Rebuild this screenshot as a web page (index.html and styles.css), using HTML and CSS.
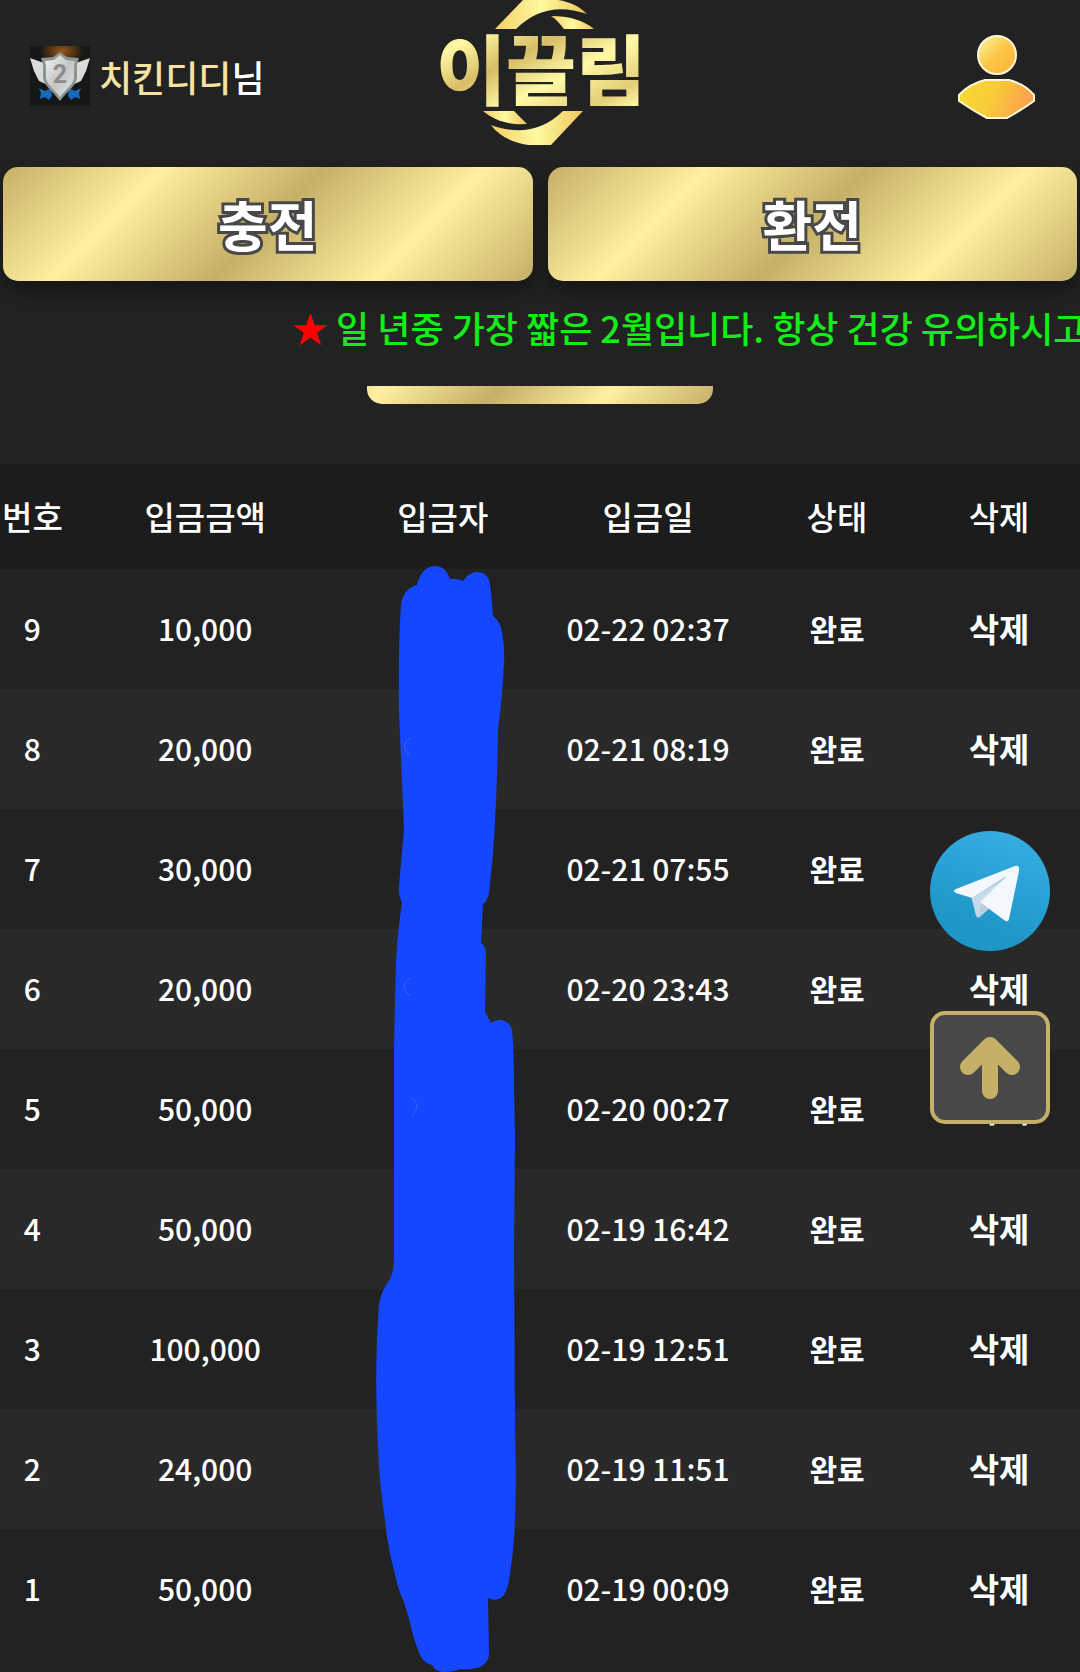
FILE: index.html
```html
<!DOCTYPE html>
<html lang="en">
<head>
    <meta charset="UTF-8">
    <meta name="viewport" content="width=device-width, initial-scale=1.0">
    <title>이끌림 - 충전 내역</title>
    <link rel="stylesheet" href="styles.css">
</head>
<body>
    <header class="site-header">
        <div class="top-bar">
            <div class="member">
                <svg class="level-badge" viewBox="0 0 60 60" role="img" aria-label="레벨 2">
                    <defs>
                        <linearGradient id="silver" x1="0" y1="0" x2="1" y2="1">
                            <stop offset="0" stop-color="#f4f4f4"/>
                            <stop offset="0.5" stop-color="#c4c6c6"/>
                            <stop offset="1" stop-color="#e2e2e2"/>
                        </linearGradient>
                        <radialGradient id="flame">
                            <stop offset="0" stop-color="#9a5a14"/>
                            <stop offset="1" stop-color="#151814"/>
                        </radialGradient>
                    </defs>
                    <rect width="60" height="60" fill="#151814"/>
                    <ellipse cx="32" cy="5" rx="22" ry="14" fill="url(#flame)"/>
                    <path d="M9 42l6 3 6-3 1 8-3 4-4-3-5 2 1-6zM51 42l-6 3-6-3-1 8 3 4 4-3 5 2-1-6z" fill="#1668bd"/>
                    <path d="M0 12l14 5 4 22-9-4-5-10zM60 12l-14 5-4 22 9-4 5-10z" fill="#d9dbd9"/>
                    <path d="M30 6l7 5 12 1-2 7v12c0 8-9 13-17 24-8-11-17-16-17-24V19l-2-7 12-1z" fill="#8f9292"/>
                    <path d="M30 9l6 5 9 1-1 5v11c0 7-7 11-14 20-7-9-14-13-14-20V20l-1-5 9-1z" fill="url(#silver)"/>
                    <text class="badge-number" x="30" y="37" text-anchor="middle">2</text>
                </svg>
                <p class="member-name"><span>치킨디디</span>님</p>
            </div>
            <a class="logo" href="#" aria-label="이끌림">
                <svg viewBox="0 0 200 146">
                    <defs>
                        <linearGradient id="gold" x1="0" y1="0" x2="1" y2="1">
                            <stop offset="0" stop-color="#d9b960"/>
                            <stop offset="0.2" stop-color="#fff9a6"/>
                            <stop offset="0.4" stop-color="#d8bc66"/>
                            <stop offset="0.6" stop-color="#fff9a6"/>
                            <stop offset="0.8" stop-color="#e3cd78"/>
                            <stop offset="0.9" stop-color="#fff6a0"/>
                            <stop offset="1" stop-color="#cfab55"/>
                        </linearGradient>
                        <linearGradient id="swoosh" x1="0" y1="0" x2="1" y2="0">
                            <stop offset="0" stop-color="#f3cf66"/>
                            <stop offset="0.5" stop-color="#fff9a0"/>
                            <stop offset="1" stop-color="#eec65c"/>
                        </linearGradient>
                    </defs>
                    <path d="M55 29L83 0h35c12 2 21 6 29 14-26-9-50-6-71 15z" fill="url(#swoosh)"/>
                    <path d="M111 16c18 0 32 4 43 13h-30c-4-5-8-10-13-13z" fill="url(#swoosh)"/>
                    <path d="M43 111h31l13 13c-18 1-32-3-44-13z" fill="url(#swoosh)"/>
                    <path d="M143 111l-32 34H88c-17-3-29-9-37-20 27 10 52 6 72-14z" fill="url(#swoosh)"/>
                    <text class="logo-text" x="101" y="99" text-anchor="middle" fill="url(#gold)">이끌림</text>
                </svg>
            </a>
            <button class="profile-btn" type="button" aria-label="내 정보">
                <svg viewBox="0 0 77 84">
                    <defs>
                        <linearGradient id="head" x1="0" y1="0" x2="1" y2="1">
                            <stop offset="0.1" stop-color="#fdee98"/>
                            <stop offset="0.5" stop-color="#fcc744"/>
                            <stop offset="1" stop-color="#fbb03c"/>
                        </linearGradient>
                        <linearGradient id="torso" x1="0" y1="0" x2="1" y2="0.2">
                            <stop offset="0" stop-color="#f6dc34"/>
                            <stop offset="0.5" stop-color="#f9cb3a"/>
                            <stop offset="1" stop-color="#fba34c"/>
                        </linearGradient>
                    </defs>
                    <circle cx="39" cy="20" r="19" fill="url(#head)" stroke="#fff6d8" stroke-width="2"/>
                    <path d="M27 45h24q16 4 25 15v6q-11 8-27 17H29Q14 75 1 66v-6q10-11 26-15z" fill="url(#torso)" stroke="#fff6d8" stroke-width="2"/>
                </svg>
            </button>
        </div>
        <div class="cash-buttons">
            <button class="gold-btn" type="button">충전</button>
            <button class="gold-btn" type="button">환전</button>
        </div>
        <div class="notice"><span class="star">★</span> 일 년중 가장 짧은 2월입니다. 항상 건강 유의하시고</div>
    </header>

    <main>
        <!-- only the lower edge of this button is left under the header -->
        <div class="scrolled-row">
            <button class="gold-btn" type="button" aria-label="충전하기"></button>
        </div>

        <div class="history">
            <table>
                <colgroup>
                    <col class="col-no">
                    <col class="col-amount">
                    <col class="col-name">
                    <col class="col-date">
                    <col class="col-state">
                    <col class="col-delete">
                </colgroup>
                <thead>
                    <tr>
                        <th>번호</th>
                        <th>입금금액</th>
                        <th>입금자</th>
                        <th>입금일</th>
                        <th>상태</th>
                        <th>삭제</th>
                    </tr>
                </thead>
                <tbody>
                    <tr><td>9</td><td>10,000</td><td></td><td>02-22 02:37</td><td class="state">완료</td><td><button class="delete-btn" type="button">삭제</button></td></tr>
                    <tr><td>8</td><td>20,000</td><td></td><td>02-21 08:19</td><td class="state">완료</td><td><button class="delete-btn" type="button">삭제</button></td></tr>
                    <tr><td>7</td><td>30,000</td><td></td><td>02-21 07:55</td><td class="state">완료</td><td><button class="delete-btn" type="button">삭제</button></td></tr>
                    <tr><td>6</td><td>20,000</td><td></td><td>02-20 23:43</td><td class="state">완료</td><td><button class="delete-btn" type="button">삭제</button></td></tr>
                    <tr><td>5</td><td>50,000</td><td></td><td>02-20 00:27</td><td class="state">완료</td><td><button class="delete-btn" type="button">삭제</button></td></tr>
                    <tr><td>4</td><td>50,000</td><td></td><td>02-19 16:42</td><td class="state">완료</td><td><button class="delete-btn" type="button">삭제</button></td></tr>
                    <tr><td>3</td><td>100,000</td><td></td><td>02-19 12:51</td><td class="state">완료</td><td><button class="delete-btn" type="button">삭제</button></td></tr>
                    <tr><td>2</td><td>24,000</td><td></td><td>02-19 11:51</td><td class="state">완료</td><td><button class="delete-btn" type="button">삭제</button></td></tr>
                    <tr><td>1</td><td>50,000</td><td></td><td>02-19 00:09</td><td class="state">완료</td><td><button class="delete-btn" type="button">삭제</button></td></tr>
                </tbody>
            </table>
            <!-- marker strokes over the depositor names -->
            <svg class="marker" viewBox="367 560 153 1112" aria-hidden="true">
                <path fill="#1447ff" d="M417 585C420 572 427 566 435 566C443 566 447 571 450 579Q457 578 463 581Q469 572 477 572Q488 572 490 584Q492 600 493 616Q500 621 502 632Q505 648 504 664Q502 700 498 729Q497 800 493 854L489 893Q487 902 483 904Q482 925 481 943Q486 946 486 954L485 1012L491 1023Q495 1020 500 1020Q510 1021 512 1030Q514 1050 514 1086L515 1136L514 1250L515 1428Q517 1490 514 1538Q512 1565 508 1585Q505 1599 494 1600L488 1598L489 1655Q488 1663 480 1667Q470 1670 460 1669Q454 1672 443 1672Q435 1671 432 1665Q424 1663 420 1655Q412 1635 410 1622L404 1602Q398 1590 395 1574Q388 1550 385 1520Q379 1480 378 1447Q374 1370 379 1304Q381 1291 390 1279Q394 1270 394 1260L394 1050Q395 1000 396 961Q398 930 402 902Q398 895 399 886L404 829L399 711Q398 650 401 604Q404 588 417 585Z"/>
                <path fill="none" stroke="#3a63ff" d="M410 738q-11 8 0 17M410 978q-12 8 0 18M412 1098q10 8 0 18"/>
            </svg>
        </div>
    </main>

    <div class="floating">
        <a class="telegram" href="#" aria-label="텔레그램">
            <svg viewBox="0 0 120 120">
                <defs>
                    <linearGradient id="sky" x1="0.7" y1="0" x2="0.4" y2="0.8">
                        <stop offset="0" stop-color="#37aee2"/>
                        <stop offset="1" stop-color="#1e96c8"/>
                    </linearGradient>
                </defs>
                <circle cx="60" cy="60" r="60" fill="url(#sky)"/>
                <path d="M41 65l5 20q2 3 5 0l10-9-8-8z" fill="#bccde0"/>
                <path d="M42 67l6 20 4-17 26-25z" fill="#c8daea"/>
                <path d="M26 58L85 35q5-1 4 5L79 88q-1 4-5 1L50 71l27-26-35 22-16-5q-4-2 0-4z" fill="#f4f8fc"/>
            </svg>
        </a>
        <button class="top-btn" type="button" aria-label="맨 위로">
            <svg viewBox="0 0 60 62">
                <path d="M30 54V10M8 30L30 8l22 22" fill="none" stroke="#c5b067" stroke-width="16" stroke-linecap="round" stroke-linejoin="round"/>
            </svg>
        </button>
    </div>
</body>
</html>
```
FILE: styles.css
```css
* {
    box-sizing: border-box;
}

body {
    font-family: "Noto Sans CJK KR", "Noto Sans", sans-serif;
    font-weight: 500;
    margin: 0;
    min-height: 100vh;
    background-color: #222;
    color: #fff;
}

button {
    font-family: inherit;
    color: inherit;
    border: none;
    padding: 0;
    background: none;
    cursor: pointer;
}

svg {
    display: block;
}

.site-header {
    height: 386px;
    overflow: hidden;
}

.top-bar {
    display: grid;
    grid-template-columns: 1fr 200px 1fr;
    height: 167px;
}

.member {
    display: flex;
    align-items: center;
    gap: 9px;
    height: 152px;
    padding-left: 30px;
}

.level-badge {
    width: 60px;
    height: 60px;
}

.badge-number {
    font-family: Roboto, sans-serif;
    font-size: 25px;
    font-weight: 700;
    fill: #8b8d8d;
}

.member-name {
    margin: 0;
    font-size: 36px;
    line-height: 52px;
}

.member-name span {
    color: #f7e3a1;
}

.logo svg {
    overflow: visible;
}

.logo-text {
    font-size: 76px;
    font-weight: 900;
}

.profile-btn {
    justify-self: end;
    align-self: start;
    width: 77px;
    margin: 35px 45px 0 0;
}

.cash-buttons {
    display: flex;
    gap: 15px;
    padding: 0 3px;
}

.gold-btn {
    flex: 1;
    height: 114px;
    border-radius: 15px;
    background: linear-gradient(135deg, #c5b067 0%, #ffef9e 25%, #c5b067 50%, #ffef9e 75%, #c5b067 100%);
    box-shadow: 0 10px 20px rgba(0, 0, 0, 0.4);
    font-size: 54px;
    font-weight: 700;
    line-height: 80px;
    -webkit-text-stroke: 6px #484848;
    paint-order: stroke fill;
}

.notice {
    padding: 20px 0 0 292px;
    font-size: 36px;
    line-height: 52px;
    white-space: nowrap;
    color: #14ee18;
}

.star {
    color: #f00;
}

.scrolled-row {
    display: flex;
    align-items: flex-end;
    justify-content: center;
    height: 18px;
    margin-bottom: 60px;
    overflow: hidden;
}

.scrolled-row .gold-btn {
    flex: 0 0 32%;
    box-shadow: none;
}

.history {
    position: relative;
    padding-bottom: 23px;
}

table {
    width: 100%;
    table-layout: fixed;
    border-collapse: collapse;
    text-align: center;
}

.col-no {
    width: 6%;
}

.col-amount {
    width: 26%;
}

.col-name {
    width: 18%;
}

.col-date {
    width: 20%;
}

.col-state,
.col-delete {
    width: 15%;
}

th,
td {
    padding: 0 0 2px;
    white-space: nowrap;
}

th {
    height: 105px;
    background-color: #1c1c1c;
    font-size: 33px;
    font-weight: 500;
}

td {
    height: 120px;
    font-size: 30px;
}

tbody tr:nth-child(even) {
    background-color: #292929;
}

.state {
    font-weight: 700;
}

.delete-btn {
    font-size: 33px;
    font-weight: 700;
}

.marker {
    position: absolute;
    top: 96px;
    left: 34%;
    width: 153px;
    height: 1112px;
}

.floating {
    position: fixed;
    right: 30px;
    bottom: 548px;
    display: flex;
    flex-direction: column;
    gap: 60px;
    width: 120px;
}

.top-btn {
    display: flex;
    align-items: center;
    justify-content: center;
    height: 113px;
    border: 4px solid #c5b067;
    border-radius: 15px;
    background-color: #484848;
}

.top-btn svg {
    width: 60px;
}
```
